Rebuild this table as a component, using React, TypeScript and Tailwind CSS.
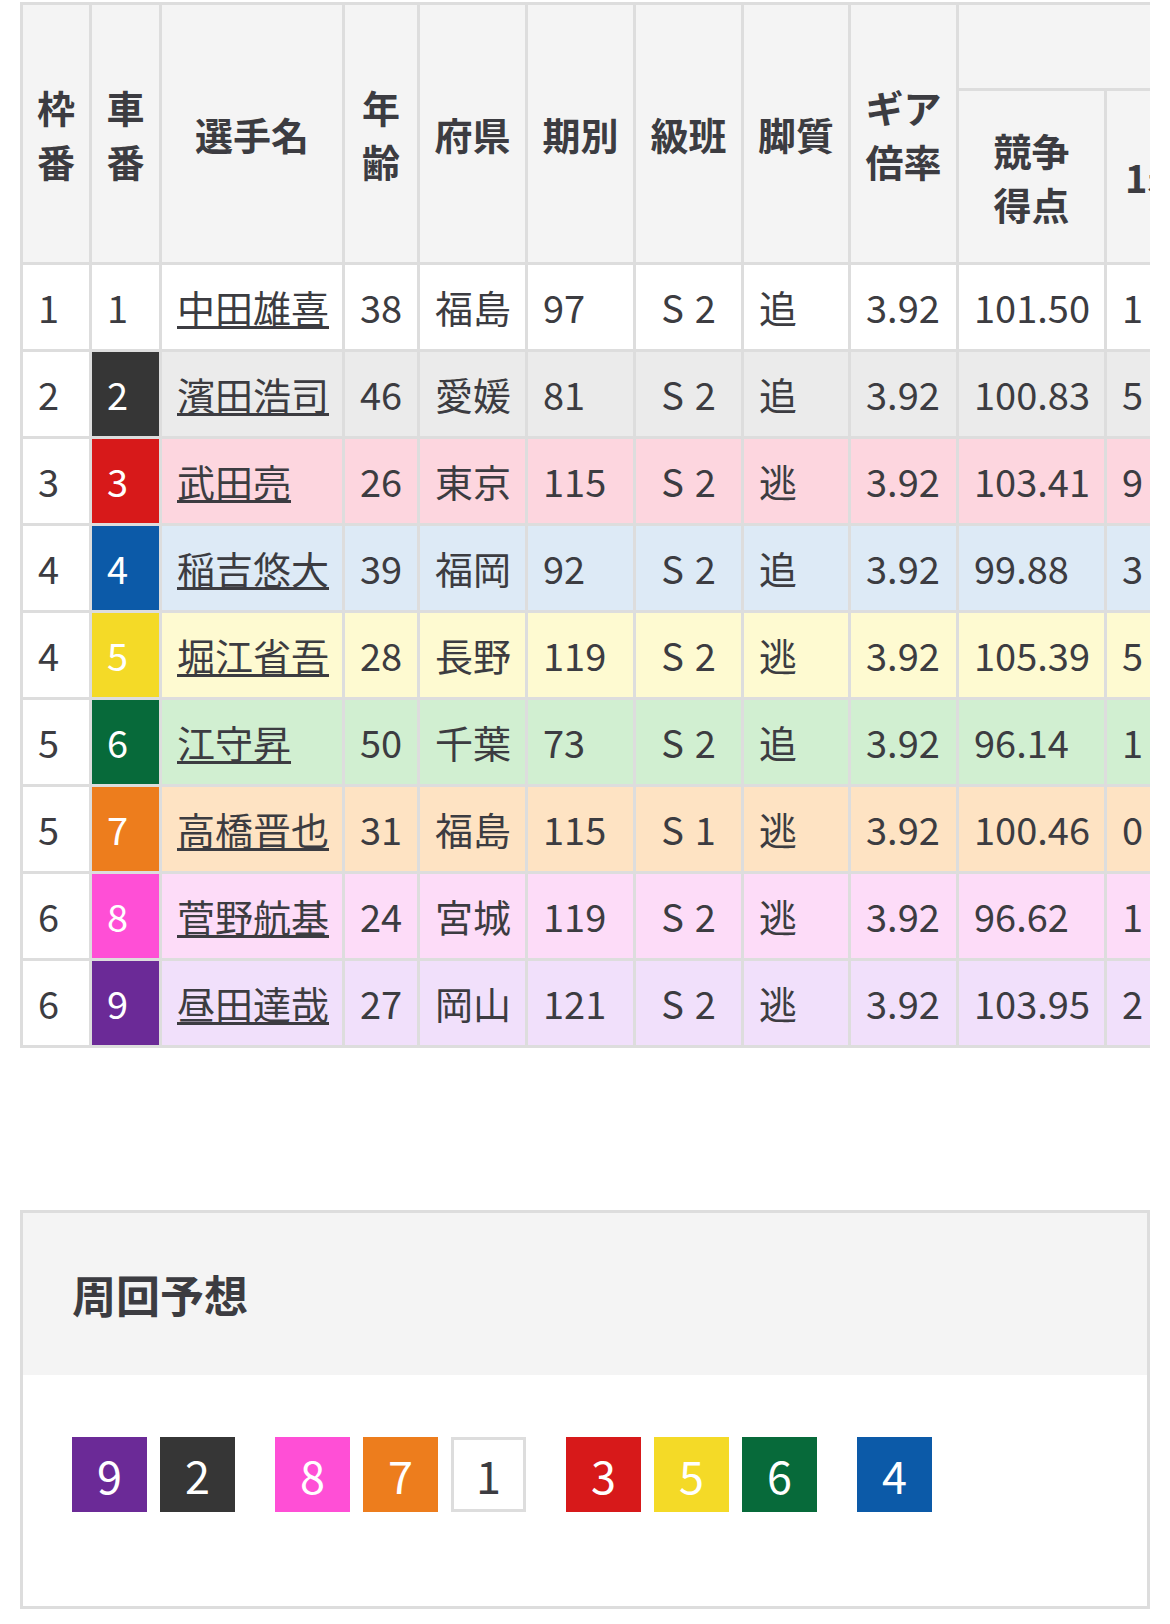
import React from "react";

type Row = {
  waku: number;
  car: number;
  name: string;
  age: number;
  pref: string;
  ki: number;
  cls: string;
  kyaku: string;
  gear: string;
  score: string;
  first: number;
};

const rows: Row[] = [
  { waku: 1, car: 1, name: "中田雄喜", age: 38, pref: "福島", ki: 97, cls: "2", kyaku: "追", gear: "3.92", score: "101.50", first: 1 },
  { waku: 2, car: 2, name: "濱田浩司", age: 46, pref: "愛媛", ki: 81, cls: "2", kyaku: "追", gear: "3.92", score: "100.83", first: 5 },
  { waku: 3, car: 3, name: "武田亮", age: 26, pref: "東京", ki: 115, cls: "2", kyaku: "逃", gear: "3.92", score: "103.41", first: 9 },
  { waku: 4, car: 4, name: "稲吉悠大", age: 39, pref: "福岡", ki: 92, cls: "2", kyaku: "追", gear: "3.92", score: "99.88", first: 3 },
  { waku: 4, car: 5, name: "堀江省吾", age: 28, pref: "長野", ki: 119, cls: "2", kyaku: "逃", gear: "3.92", score: "105.39", first: 5 },
  { waku: 5, car: 6, name: "江守昇", age: 50, pref: "千葉", ki: 73, cls: "2", kyaku: "追", gear: "3.92", score: "96.14", first: 1 },
  { waku: 5, car: 7, name: "高橋晋也", age: 31, pref: "福島", ki: 115, cls: "1", kyaku: "逃", gear: "3.92", score: "100.46", first: 0 },
  { waku: 6, car: 8, name: "菅野航基", age: 24, pref: "宮城", ki: 119, cls: "2", kyaku: "逃", gear: "3.92", score: "96.62", first: 1 },
  { waku: 6, car: 9, name: "昼田達哉", age: 27, pref: "岡山", ki: 121, cls: "2", kyaku: "逃", gear: "3.92", score: "103.95", first: 2 },
];

const rowBg: Record<number, string> = {
  1: "bg-white",
  2: "bg-[#ebebeb]",
  3: "bg-[#fdd6df]",
  4: "bg-[#ddeaf6]",
  5: "bg-[#fefad1]",
  6: "bg-[#d1efd1]",
  7: "bg-[#fee3c3]",
  8: "bg-[#fddcf8]",
  9: "bg-[#f1e0fb]",
};

const carBg: Record<number, string> = {
  1: "bg-white text-[#3c3c41]",
  2: "bg-[#363636] text-white",
  3: "bg-[#d7191a] text-white",
  4: "bg-[#0c5aa8] text-white",
  5: "bg-[#f4da27] text-white",
  6: "bg-[#076a3a] text-white",
  7: "bg-[#ed7d1d] text-white",
  8: "bg-[#ff4fd6] text-white",
  9: "bg-[#6b2a97] text-white",
};

const badgeCls: Record<number, string> = {
  1: "bg-white text-[#3c3c41] border-[3px] border-[#dddddd]",
  2: "bg-[#363636] text-white",
  3: "bg-[#d7191a] text-white",
  4: "bg-[#0c5aa8] text-white",
  5: "bg-[#f4da27] text-white",
  6: "bg-[#076a3a] text-white",
  7: "bg-[#ed7d1d] text-white",
  8: "bg-[#ff4fd6] text-white",
  9: "bg-[#6b2a97] text-white",
};

const groups = [[9, 2], [8, 7, 1], [3, 5, 6], [4]];

const th = "bg-[#f4f4f4] p-0 text-center align-middle font-bold leading-[54px]";
const td = "h-[84px] p-0 pl-[15px] text-left align-middle leading-[56px]";

export default function App() {
  return (
    <div className="w-[1170px] min-h-[1624px] bg-white pt-[2px] font-['Noto_Sans_CJK_JP','Noto_Sans',sans-serif] text-[#3c3c41] text-[38px]">
      <div className="mx-[20px] overflow-hidden">
        <table className="w-[1202px] table-fixed border-separate border-spacing-[3px] bg-[#dddddd]">
          <colgroup>
            <col className="w-[66px]" />
            <col className="w-[67px]" />
            <col className="w-[180px]" />
            <col className="w-[72px]" />
            <col className="w-[105px]" />
            <col className="w-[105px]" />
            <col className="w-[105px]" />
            <col className="w-[104px]" />
            <col className="w-[105px]" />
            <col className="w-[145px]" />
            <col className="w-[112px]" />
          </colgroup>
          <thead>
            <tr>
              <th rowSpan={2} className={th}>枠<br />番</th>
              <th rowSpan={2} className={th}>車<br />番</th>
              <th rowSpan={2} className={th}>選手名</th>
              <th rowSpan={2} className={th}>年<br />齢</th>
              <th rowSpan={2} className={th}>府県</th>
              <th rowSpan={2} className={th}>期別</th>
              <th rowSpan={2} className={th}>級班</th>
              <th rowSpan={2} className={th}>脚質</th>
              <th rowSpan={2} className={th}>ギア<br />倍率</th>
              <th colSpan={2} className={`${th} h-[83px]`}></th>
            </tr>
            <tr>
              <th className={`${th} h-[171px]`}>競争<br />得点</th>
              <th className="h-[171px] whitespace-nowrap bg-[#f4f4f4] p-0 pl-[18px] text-left align-middle font-bold leading-[54px]">1着</th>
            </tr>
          </thead>
          <tbody>
            {rows.map((r) => (
              <tr key={r.car}>
                <td className={`${td} bg-white`}>{r.waku}</td>
                <td className={`${td} ${carBg[r.car]}`}>{r.car}</td>
                <td className={`${td} ${rowBg[r.car]}`}>
                  <a className="underline decoration-[3px] underline-offset-[3px] whitespace-nowrap">{r.name}</a>
                </td>
                <td className={`${td} ${rowBg[r.car]}`}>{r.age}</td>
                <td className={`${td} ${rowBg[r.car]}`}>{r.pref}</td>
                <td className={`${td} ${rowBg[r.car]}`}>{r.ki}</td>
                <td className={`h-[84px] p-0 text-center align-middle leading-[56px] whitespace-nowrap ${rowBg[r.car]}`}>
                  <span className="mr-[11px]">S</span>
                  {r.cls}
                </td>
                <td className={`${td} ${rowBg[r.car]}`}>{r.kyaku}</td>
                <td className={`${td} ${rowBg[r.car]}`}>{r.gear}</td>
                <td className={`${td} ${rowBg[r.car]}`}>{r.score}</td>
                <td className={`${td} ${rowBg[r.car]}`}>{r.first}</td>
              </tr>
            ))}
          </tbody>
        </table>
      </div>

      <div className="mx-[20px] mt-[162px] border-[3px] border-[#dddddd]">
        <div className="flex h-[162px] items-center bg-[#f4f4f4] pl-[49px]">
          <h2 className="text-[44px] font-bold leading-none">周回予想</h2>
        </div>
        <div className="flex gap-[40px] bg-white pb-[94px] pl-[49px] pt-[62px]">
          {groups.map((g, i) => (
            <div key={i} className="flex gap-[13px]">
              {g.map((n) => (
                <div
                  key={n}
                  className={`flex h-[75px] w-[75px] items-center justify-center text-[45px] leading-none ${badgeCls[n]}`}
                >
                  {n}
                </div>
              ))}
            </div>
          ))}
        </div>
      </div>
    </div>
  );
}
